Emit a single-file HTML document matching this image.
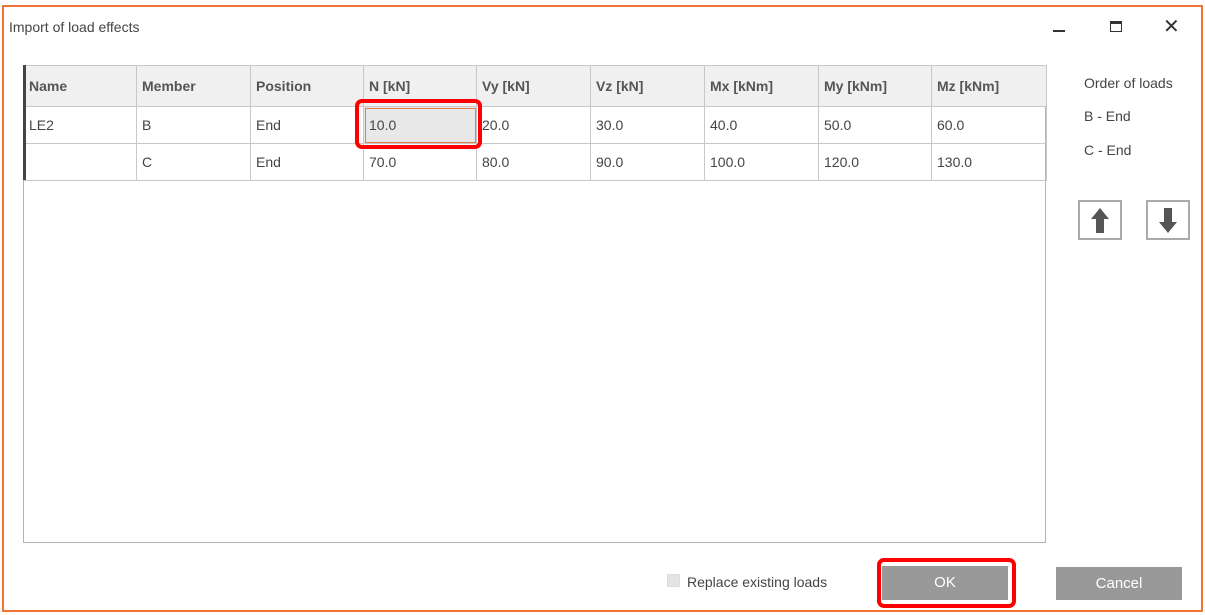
<!DOCTYPE html>
<html><head><meta charset="utf-8"><style>
*{box-sizing:border-box;margin:0;padding:0}
body{width:1205px;height:615px;background:#fff;position:relative;font-family:"Liberation Sans",sans-serif;color:#333;overflow:hidden}
.abs{position:absolute}
.win{left:2px;top:5px;width:1201px;height:607px;border:2px solid #f07434}
.t{font-size:14px;color:#444}
table{position:absolute;left:23px;top:65px;border-collapse:collapse;font-size:14px;table-layout:fixed;width:1023px}
td,th{border:1px solid #c8c8c8;height:37px;padding:0 0 0 5px;text-align:left;color:#444;overflow:hidden;white-space:nowrap}
th{height:41px;background:#f0f0f0;font-weight:bold;color:#555}
.grid{left:23px;top:65px;width:1023px;height:478px;border:1px solid #b4b4b4}
.btn{background:#999;color:#fff;font-size:15px;text-align:center;line-height:34px}
.red{border:4px solid #f00;border-radius:7px}
.ab{width:44px;height:40px;border:2px solid #aaa;background:#fff}
</style></head><body>
<div class="abs win"></div>
<div class="abs t" style="left:9px;top:19px">Import of load effects</div>
<div class="abs" style="left:1053px;top:30px;width:12px;height:2px;background:#333"></div>
<div class="abs" style="left:1110px;top:21px;width:12px;height:11px;border:1.5px solid #333;border-top-width:3px"></div>
<div class="abs" style="left:1163px;top:14px;font-size:20px;color:#333">✕</div>
<div class="abs grid"></div>
<table>
<colgroup><col style="width:113px"><col style="width:114px"><col style="width:113px"><col style="width:113px"><col style="width:114px"><col style="width:114px"><col style="width:114px"><col style="width:113px"><col style="width:115px"></colgroup>
<tr><th>Name</th><th>Member</th><th>Position</th><th>N [kN]</th><th>Vy [kN]</th><th>Vz [kN]</th><th>Mx [kNm]</th><th>My [kNm]</th><th>Mz [kNm]</th></tr>
<tr><td>LE2</td><td>B</td><td>End</td><td style="background:#e8e8e8;outline:1px solid #e08050;outline-offset:-2px">10.0</td><td>20.0</td><td>30.0</td><td>40.0</td><td>50.0</td><td>60.0</td></tr>
<tr><td></td><td>C</td><td>End</td><td>70.0</td><td>80.0</td><td>90.0</td><td>100.0</td><td>120.0</td><td>130.0</td></tr>
</table>
<div class="abs" style="left:23px;top:65px;width:3px;height:115px;background:#444"></div>
<div class="abs red" style="left:355px;top:99px;width:127px;height:50px"></div>
<div class="abs t" style="left:1084px;top:75px">Order of loads</div>
<div class="abs t" style="left:1084px;top:108px">B - End</div>
<div class="abs t" style="left:1084px;top:142px">C - End</div>
<div class="abs ab" style="left:1078px;top:200px"><svg width="40" height="36"><path d="M20 6 L29 17 L24 17 L24 31 L16 31 L16 17 L11 17 Z" fill="#555"/></svg></div>
<div class="abs ab" style="left:1146px;top:200px"><svg width="40" height="36"><path d="M20 31 L29 20 L24 20 L24 6 L16 6 L16 20 L11 20 Z" fill="#555"/></svg></div>
<div class="abs" style="left:667px;top:574px;width:13px;height:13px;background:#e4e4e4;border:1px solid #ddd"></div>
<div class="abs t" style="left:687px;top:574px">Replace existing loads</div>
<div class="abs btn" style="left:882px;top:566px;width:126px;height:34px">OK</div>
<div class="abs red" style="left:877px;top:558px;width:139px;height:50px"></div>
<div class="abs btn" style="left:1056px;top:567px;width:126px;height:33px">Cancel</div>
</body></html>
